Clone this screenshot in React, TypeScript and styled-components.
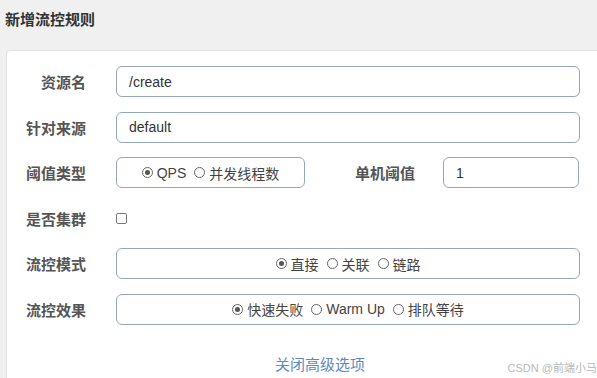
import styled, { createGlobalStyle } from "styled-components"

const GlobalStyle = createGlobalStyle`
  html, body {
    margin: 0;
    padding: 0;
    background: #f0f0f0;
    overflow: hidden;
    font-family: "Liberation Sans", "Noto Sans CJK SC", sans-serif;
  }
`

const Page = styled.div`
  position: relative;
  width: 597px;
  height: 378px;
  overflow: hidden;
`

const Header = styled.div`
  height: 50px;
  padding-left: 5px;
  display: flex;
  align-items: center;
  font-size: 15px;
  font-weight: bold;
  color: #333;
  box-sizing: border-box;
  padding-bottom: 14px;
`

const Panel = styled.div`
  margin-left: 6px;
  width: 628px;
  height: 340px;
  background: #fff;
  border: 1px solid #e2e2e2;
  border-radius: 4px;
  box-sizing: border-box;
  padding: 15px 0 0 0;
`

const Form = styled.div`
  display: grid;
  grid-template-columns: 79px 464px;
  grid-auto-rows: 31px;
  column-gap: 30px;
  row-gap: 14.5px;
  align-items: center;
`

const Label = styled.div`
  text-align: right;
  font-size: 15px;
  font-weight: bold;
  color: #555;
`

const Field = styled.div<{ $width?: string }>`
  height: 31px;
  width: ${(p) => p.$width || "100%"};
  box-sizing: border-box;
  border: 1px solid #93a8bb;
  border-radius: 6px;
  display: flex;
  align-items: center;
  padding-left: 12px;
  font-size: 14px;
  color: #333;
`

const RadioBox = styled(Field)`
  justify-content: center;
  padding-left: 0;
  gap: 8px;
`

const Split = styled.div`
  display: flex;
  align-items: center;
`

const SideLabel = styled(Label)`
  margin-left: 50px;
  margin-right: 28px;
`

const Option = styled.span`
  display: inline-flex;
  align-items: center;
  gap: 4px;
  font-size: 14px;
  color: #444;
`

const Dot = styled.span<{ $on?: boolean }>`
  width: 11px;
  height: 11px;
  border-radius: 50%;
  border: 1px solid #666;
  box-sizing: border-box;
  display: inline-flex;
  align-items: center;
  justify-content: center;
  &::after {
    content: "";
    width: 5px;
    height: 5px;
    border-radius: 50%;
    background: ${(p) => (p.$on ? "#555" : "transparent")};
  }
`

const Check = styled.span`
  width: 11px;
  height: 11px;
  border: 1px solid #777;
  border-radius: 2px;
  box-sizing: border-box;
  display: block;
`

const LinkRow = styled.div`
  text-align: center;
  margin-top: 28px;
  font-size: 15px;
  color: #5b8bc2;
`

const Watermark = styled.div`
  position: absolute;
  right: 0;
  bottom: 3px;
  font-size: 11px;
  color: #b8b8b8;
`

const Radio = ({ on, text }: { on?: boolean; text: string }) => (
  <Option>
    <Dot $on={on} />
    {text}
  </Option>
)

export default function App() {
  return (
    <Page>
      <GlobalStyle />
      <Header>新增流控规则</Header>
      <Panel>
        <Form>
          <Label>资源名</Label>
          <Field>/create</Field>
          <Label>针对来源</Label>
          <Field>default</Field>
          <Label>阈值类型</Label>
          <Split>
            <RadioBox $width="189px">
              <Radio on text="QPS" />
              <Radio text="并发线程数" />
            </RadioBox>
            <SideLabel>单机阈值</SideLabel>
            <Field $width="136px">1</Field>
          </Split>
          <Label>是否集群</Label>
          <Check />
          <Label>流控模式</Label>
          <RadioBox>
            <Radio on text="直接" />
            <Radio text="关联" />
            <Radio text="链路" />
          </RadioBox>
          <Label>流控效果</Label>
          <RadioBox>
            <Radio on text="快速失败" />
            <Radio text="Warm Up" />
            <Radio text="排队等待" />
          </RadioBox>
        </Form>
        <LinkRow>关闭高级选项</LinkRow>
      </Panel>
      <Watermark>CSDN @前端小马</Watermark>
    </Page>
  )
}
